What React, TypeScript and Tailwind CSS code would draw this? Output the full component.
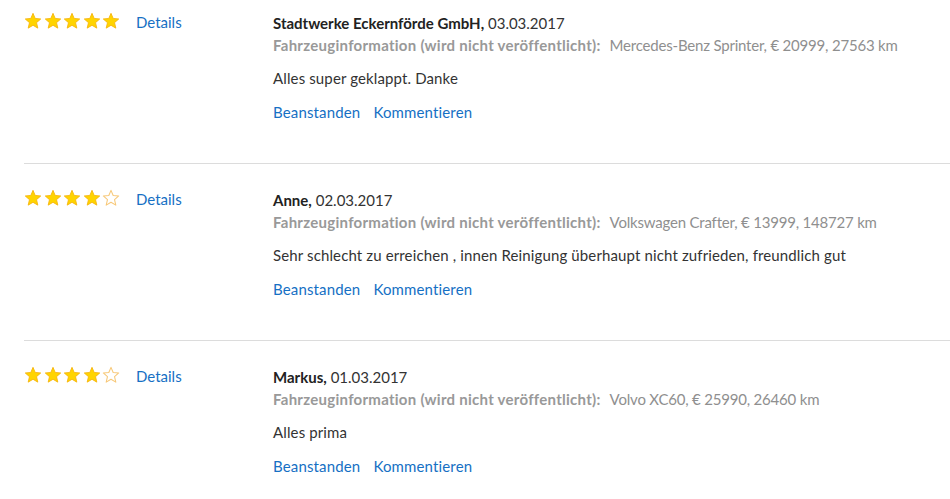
import React from "react";

type Review = {
  rating: number;
  name: string;
  date: string;
  vehicle: string;
  comment: string;
};

const reviews: Review[] = [
  {
    rating: 5,
    name: "Stadtwerke Eckernförde GmbH",
    date: "03.03.2017",
    vehicle: "Mercedes-Benz Sprinter, € 20999, 27563 km",
    comment: "Alles super geklappt. Danke",
  },
  {
    rating: 4,
    name: "Anne",
    date: "02.03.2017",
    vehicle: "Volkswagen Crafter, € 13999, 148727 km",
    comment:
      "Sehr schlecht zu erreichen , innen Reinigung überhaupt nicht zufrieden, freundlich gut",
  },
  {
    rating: 4,
    name: "Markus",
    date: "01.03.2017",
    vehicle: "Volvo XC60, € 25990, 26460 km",
    comment: "Alles prima",
  },
];

function Star({ filled }: { filled: boolean }) {
  return (
    <svg width="18" height="18" viewBox="0 0 24 24" className="block">
      <polygon
        points="12,1.8 14.9,8.6 22.3,9.3 16.7,14.2 18.4,21.5 12,17.7 5.6,21.5 7.3,14.2 1.7,9.3 9.1,8.6"
        fill={filled ? "#ffd400" : "#ffffff"}
        stroke={filled ? "#f6b60e" : "#f7c878"}
        strokeWidth={filled ? 1.2 : 1.4}
        strokeLinejoin="round"
      />
    </svg>
  );
}

export default function App() {
  return (
    <div
      className="bg-white w-[950px] h-[499px] overflow-hidden text-[15px] leading-[23px] text-[#333]"
      style={{ fontFamily: "Lato, 'Open Sans', sans-serif" }}
    >
      <div className="ml-[24px]">
        {reviews.map((r, i) => (
          <div
            key={i}
            className={`flex pb-[39px] ${i === 0 ? "pt-[11px]" : "pt-[24px]"} ${
              i < reviews.length - 1 ? "border-b border-[#dcdcdc]" : ""
            }`}
          >
            <div className="w-[249px] shrink-0 flex items-center h-[23px]">
              <div className="flex gap-[1.5px] -mt-[3px]">
                {[0, 1, 2, 3, 4].map((s) => (
                  <Star key={s} filled={s < r.rating} />
                ))}
              </div>
              <a className="ml-[16px] text-[#1670c4]">Details</a>
            </div>
            <div className="flex-1">
              <div className="leading-[22px] pt-[0.5px]">
                <span className="font-bold text-[#222]">{r.name},</span>{" "}
                <span>{r.date}</span>
              </div>
              <div className="text-[#999]">
                <span className="font-bold tracking-[0.27px]">
                  Fahrzeuginformation (wird nicht veröffentlicht):
                </span>
                <span className="ml-[9px] text-[#8f8f8f] tracking-[-0.2px]">
                  {r.vehicle}
                </span>
              </div>
              <div className="mt-[10.5px] tracking-[0.13px]">{r.comment}</div>
              <div className="mt-[11px] flex gap-[13px] text-[#1670c4] tracking-[0.15px]">
                <a>Beanstanden</a>
                <a>Kommentieren</a>
              </div>
            </div>
          </div>
        ))}
      </div>
    </div>
  );
}
